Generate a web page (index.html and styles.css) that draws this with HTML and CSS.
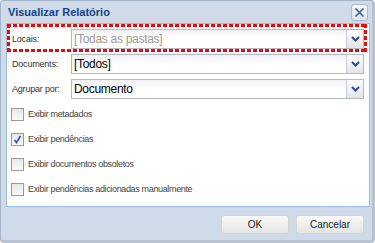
FILE: index.html
```html
<!DOCTYPE html>
<html lang="pt">
<head>
    <meta charset="UTF-8">
    <meta name="viewport" content="width=device-width, initial-scale=1.0">
    <title>Visualizar Relatório</title>
    <link rel="stylesheet" href="styles.css">
</head>
<body>
    <div class="window">
        <div class="title-bar">
            <span class="title">Visualizar Relatório</span>
            <span class="close-btn">
                <svg width="11" height="11" viewBox="0 0 11 11"><path d="M1.5 1.5 L9.5 9.5 M9.5 1.5 L1.5 9.5" stroke="#3d5f94" stroke-width="1.6" fill="none"/></svg>
            </span>
        </div>

        <div class="panel">
            <!-- Linha destacada -->
            <div class="highlight">
                <div class="row">
                    <label class="field-label">Locais:</label>
                    <div class="combo">
                        <span class="combo-text placeholder">[Todas as pastas]</span>
                        <span class="combo-arrow"><svg width="9" height="6" viewBox="0 0 9 6"><path d="M1 1 L4.5 4.5 L8 1" stroke="#2f4f86" stroke-width="2" fill="none"/></svg></span>
                    </div>
                </div>
            </div>

            <div class="row">
                <label class="field-label">Documents:</label>
                <div class="combo required">
                    <span class="combo-text">[Todos]</span>
                    <span class="combo-arrow"><svg width="9" height="6" viewBox="0 0 9 6"><path d="M1 1 L4.5 4.5 L8 1" stroke="#2f4f86" stroke-width="2" fill="none"/></svg></span>
                </div>
            </div>

            <div class="row">
                <label class="field-label">Agrupar por:</label>
                <div class="combo required">
                    <span class="combo-text">Documento</span>
                    <span class="combo-arrow"><svg width="9" height="6" viewBox="0 0 9 6"><path d="M1 1 L4.5 4.5 L8 1" stroke="#2f4f86" stroke-width="2" fill="none"/></svg></span>
                </div>
            </div>

            <div class="checks">
                <div class="check-row"><span class="checkbox"></span>Exibir metadados</div>
                <div class="check-row"><span class="checkbox checked"><svg width="11" height="11" viewBox="0 0 11 11"><path d="M2.5 6 L4.5 8.5 L8.5 2" stroke="#2a52a8" stroke-width="1.6" fill="none"/></svg></span>Exibir pendências</div>
                <div class="check-row"><span class="checkbox"></span>Exibir documentos obsoletos</div>
                <div class="check-row"><span class="checkbox"></span>Exibir pendências adicionadas manualmente</div>
            </div>
        </div>

        <div class="footer">
            <button class="btn">OK</button>
            <button class="btn">Cancelar</button>
        </div>
    </div>
</body>
</html>
```

FILE: styles.css
```css
body {
    margin: 0;
    font-family: 'Liberation Sans', Arial, sans-serif;
    background-color: #fff;
}

.window {
    width: 375px;
    height: 243px;
    box-sizing: border-box;
    background-color: #cfdbe9;
    border: 1px solid #a3b4c9;
    border-right: 3px solid #b9c3cf;
    border-bottom: 3px solid #b9c3cf;
    border-radius: 4px;
    display: flex;
    flex-direction: column;
}

.title-bar {
    height: 22px;
    display: flex;
    align-items: center;
    justify-content: space-between;
    padding: 0 4px 0 7px;
}

.title {
    font-weight: bold;
    font-size: 11px;
    color: #15428b;
}

.close-btn {
    width: 15px;
    height: 15px;
    border: 1px solid #a9bdd6;
    border-radius: 3px;
    background: linear-gradient(#f4f8fc, #dde7f2);
    display: flex;
    align-items: center;
    justify-content: center;
}

.panel {
    margin: 0 2px 0 5px;
    height: 184px;
    box-sizing: border-box;
    background-color: #fff;
    border: 1px solid #99bbe8;
    padding-right: 2px;
}

/* Moldura pontilhada vermelha */
.highlight {
    padding: 5px 3px 3px 5px;
    margin-bottom: 2px;
    height: 28px;
    box-sizing: border-box;
    background:
        repeating-linear-gradient(90deg, #f00 0 4px, transparent 4px 6px) top left / 100% 3px no-repeat,
        repeating-linear-gradient(90deg, #f00 0 4px, transparent 4px 6px) bottom left / 100% 3px no-repeat,
        repeating-linear-gradient(180deg, #f00 0 4px, transparent 4px 6px) top left / 3px 100% no-repeat,
        repeating-linear-gradient(180deg, #f00 0 4px, transparent 4px 6px) top right / 3px 100% no-repeat;
}

.row {
    display: flex;
    align-items: center;
    height: 20px;
    margin-bottom: 5px;
}

.highlight .row {
    margin-bottom: 0;
}

.panel > .row {
    padding-left: 5px;
}

.field-label {
    width: 59px;
    font-size: 9px;
    letter-spacing: -0.2px;
    color: #333;
}

.combo {
    flex: 1;
    height: 20px;
    box-sizing: border-box;
    display: flex;
    border: 1px solid #b5b8c8;
    background: linear-gradient(#f1f1f1, #fff 45%);
}

.panel > .row .combo {
    margin-right: 3px;
}

.combo.required {
    border-left-color: #f0a35e;
}

.combo-text {
    flex: 1;
    font-size: 12px;
    letter-spacing: -0.3px;
    line-height: 18px;
    padding-left: 2px;
    color: #000;
}

.combo-text.placeholder {
    color: #9a9a9a;
}

.combo-arrow {
    width: 16px;
    border-left: 1px solid #c9cbd6;
    background: linear-gradient(#fdfdfd, #e3e5ea);
    display: flex;
    align-items: center;
    justify-content: center;
}

.checks {
    padding: 4px 0 0 4px;
}

.check-row {
    height: 25px;
    display: flex;
    align-items: flex-start;
    font-size: 9px;
    letter-spacing: -0.35px;
    color: #444;
    line-height: 13px;
}

.checkbox {
    width: 11px;
    height: 11px;
    border: 1px solid #9a9a9a;
    background: linear-gradient(#e6e6e6, #fafafa);
    margin-right: 4px;
    display: flex;
    align-items: center;
    justify-content: center;
}

.footer {
    display: flex;
    justify-content: flex-end;
    gap: 7px;
    padding: 8px 8px 0 0;
}

.btn {
    width: 68px;
    height: 19px;
    padding: 0;
    font-family: 'Liberation Sans', Arial, sans-serif;
    font-size: 10px;
    color: #222;
    border: 1px solid #d4d4d4;
    border-radius: 3px;
    background: linear-gradient(#fafafa, #e4e4e4);
}
```
